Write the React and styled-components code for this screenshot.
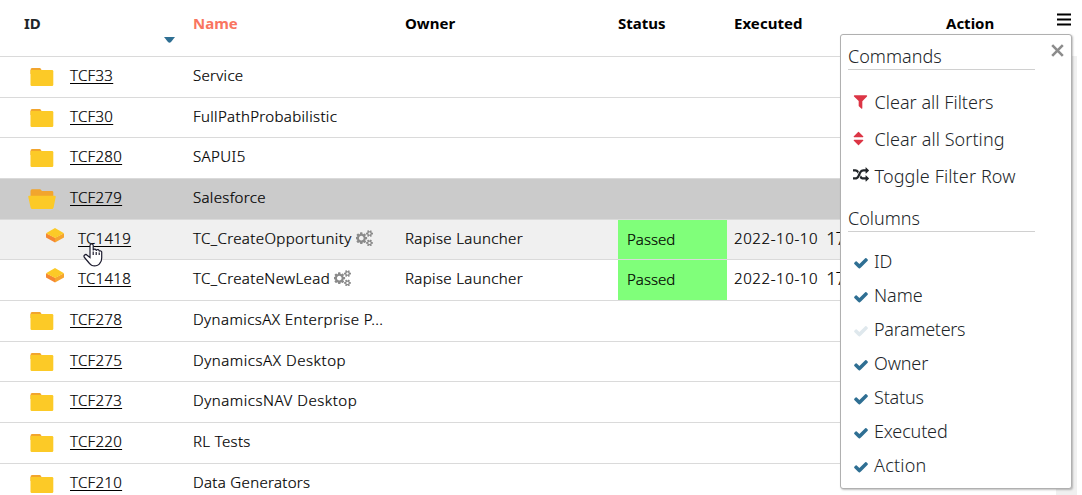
import React from "react";
import styled, { createGlobalStyle, css } from "styled-components";

const Global = createGlobalStyle`
  * { box-sizing: border-box; }
  body { margin: 0; background: #fff; overflow: hidden; }
`;

const Page = styled.div`
  position: relative;
  width: 1082px;
  height: 495px;
  overflow: hidden;
  background: #fff;
  color: #000;
  font: 300 15px/20px "Noto Sans", "Open Sans", sans-serif;
`;

const columns = css`
  display: grid;
  grid-template-columns: 193px 212px 213px 109px 113px;
`;

const Header = styled.div`
  ${columns}
  grid-template-columns: 193px 212px 213px 116px 212px 1fr;
  width: 1082px;
  height: 56px;
  padding-top: 13px;
  font-weight: 700;
`;

const HeadCell = styled.div`
  color: ${(p) => p.$color || "#000"};
  padding-left: ${(p) => p.$indent || 0}px;
  letter-spacing: ${(p) => p.$track || 0}px;
  display: flex;
  justify-content: space-between;
`;

const SortMark = styled.svg`
  width: 11px;
  height: 6px;
  margin: 24px 18px 0 0;
`;

const MenuIcon = styled.svg`
  width: 14px;
  height: 13px;
  margin: 0 11px 0 0;
`;

const Body = styled.div`
  display: flex;
  width: 1077px;
  height: 439px;
  -webkit-text-stroke: 0.2px #000;
`;

const Rows = styled.div`
  width: 1056px;
`;

const Track = styled.div`
  width: 21px;
  background: #f0f0f0;
`;

const Row = styled.div`
  ${columns}
  height: ${(p) => p.$height}px;
  border-top: 1px solid #dadada;
  background: ${(p) => p.$bg || "#fff"};
`;

const IdCell = styled.div`
  display: flex;
  align-items: flex-start;
  padding-left: ${(p) => (p.$child ? 45 : 28)}px;
`;

const IconSlot = styled.span`
  display: flex;
  width: ${(p) => (p.$child ? 33 : 42)}px;
  padding-top: ${(p) => (p.$child ? 7 : 9)}px;
`;

const Link = styled.a`
  margin-top: 8px;
  color: #000;
  text-decoration: underline;
  text-decoration-thickness: 1px;
  text-underline-offset: 2px;
  letter-spacing: 0.3px;
`;

const Cell = styled.div`
  display: flex;
  align-items: flex-start;
  padding-top: 8px;
  white-space: nowrap;
  letter-spacing: ${(p) => p.$track || 0}px;
`;

const Cogs = styled.svg`
  width: 17.6px;
  height: 16.4px;
  margin: 2px 0 0 4px;
  fill: #8a8a8a;
`;

const StatusCell = styled.div`
  padding: 9px 0 0 9px;
  background: #80ff7a;
`;

const DateCell = styled(Cell)`
  padding-left: 7px;
`;

const Time = styled.span`
  margin-left: 8px;
  font-size: 18px;
  letter-spacing: -1px;
`;

const Popup = styled.div`
  position: absolute;
  left: 840px;
  top: 34px;
  width: 232px;
  height: 455px;
  padding: 8px 7px;
  border: 1px solid #b0b0b0;
  border-radius: 3px;
  background: #fff;
  box-shadow: 1px 1px 2px rgba(0, 0, 0, 0.25);
  color: #212529;
  font: 300 18px/26px "Noto Sans", "Open Sans", sans-serif;
`;

const Close = styled.svg`
  position: absolute;
  right: 7px;
  top: 9px;
  width: 13px;
  height: 13px;
`;

const Section = styled.div`
  width: 187px;
  height: 27px;
  border-bottom: 1px solid #d0d0d0;
`;

const Commands = styled.div`
  padding: 13px 0 11px 5px;
`;

const Columns = styled.div`
  padding: 12px 0 0 5px;
`;

const Item = styled.div`
  display: flex;
  align-items: center;
  height: ${(p) => p.$height}px;
  letter-spacing: ${(p) => p.$track || 0}px;
  white-space: nowrap;
`;

const Mark = styled.span`
  display: flex;
  width: ${(p) => p.$width}px;
  color: ${(p) => p.$color};
  margin-top: ${(p) => p.$drop || 0}px;
`;

const Glyph = styled.svg`
  width: ${(p) => p.$size}px;
  height: ${(p) => p.$size}px;
  margin-left: ${(p) => p.$shift || 0}px;
  fill: currentColor;
`;

const Pointer = styled.svg`
  position: absolute;
  left: 83px;
  top: 242px;
  width: 20px;
  height: 26px;
`;

const paths = {
  check: "M1671 566q0 40-28 68l-724 724-136 136q-28 28-68 28t-68-28l-136-136-362-362q-28-28-28-68t28-68l136-136q28-28 68-28t68 28l294 295 656-657q28-28 68-28t68 28l136 136q28 28 28 68z",
  filter: "M1595 295q17 41-14 70l-493 493v742q0 42-39 59-13 5-25 5-27 0-45-19l-256-256q-19-19-19-45v-495l-493-493q-31-29-14-70 17-39 59-39h1280q42 0 59 39z",
  sort: "M1408 1088q0 26-19 45l-448 448q-19 19-45 19t-45-19l-448-448q-19-19-19-45t19-45 45-19h896q26 0 45 19t19 45zm0-384q0 26-19 45t-45 19h-896q-26 0-45-19t-19-45 19-45l448-448q19-19 45-19t45 19l448 448q19 19 19 45z",
  random: "M666 481q-60 92-137 273-22-45-37-72.500t-40.500-63.500-51-56.500-63-35-81.500-14.500h-224q-14 0-23-9t-9-23v-192q0-14 9-23t23-9h224q250 0 410 225zm1126 799q0 14-9 23l-320 320q-9 9-23 9-13 0-22.500-9.500t-9.500-22.500v-192q-32 0-85 .5t-81 1-73-1-71-5-64-10.500-63-18.500-58-28.500-59-40-55-53.500-56-69.500q59-93 136-273 22 45 37 72.500t40.500 63.500 51 56.500 63 35 81.500 14.500h256v-192q0-14 9-23t23-9q12 0 24 10l319 319q9 9 9 23zm0-896q0 14-9 23l-320 320q-9 9-23 9-13 0-22.500-9.500t-9.500-22.500v-192h-256q-48 0-87 15t-69 45-51 61.500-45 77.500q-32 62-78 171-29 66-49.500 111t-54 105-64 100-74 83-90 68.500-106.500 42-128 16.500h-224q-14 0-23-9t-9-23v-192q0-14 9-23t23-9h224q48 0 87-15t69-45 51-61.500 45-77.500q32-62 78-171 29-66 49.500-111t54-105 64-100 74-83 90-68.500 106.500-42 128-16.500h256v-192q0-14 9-23t23-9q12 0 24 10l319 319q9 9 9 23z",
  cogs: "M832 896q0-106-75-181t-181-75-181 75-75 181 75 181 181 75 181-75 75-181zm768 512q0-52-38-90t-90-38-90 38-38 90q0 53 37.500 90.500t90.500 37.500 90.500-37.500 37.500-90.500zm0-1024q0-52-38-90t-90-38-90 38-38 90q0 53 37.500 90.500t90.500 37.500 90.500-37.500 37.500-90.500zm-384 421v185q0 10-7 19.500t-16 10.500l-155 24q-11 35-32 76 34 48 90 115 7 11 7 20 0 12-7 19-23 30-82.500 89.500t-78.500 59.500q-11 0-21-7l-115-90q-37 19-77 31-11 108-23 155-7 24-30 24h-186q-11 0-20-7.500t-10-17.500l-23-153q-34-10-75-31l-118 89q-7 7-20 7-11 0-21-8-144-133-144-160 0-9 7-19 10-14 41-53t47-61q-23-44-35-82l-152-24q-10-1-17-9.500t-7-19.500v-185q0-10 7-19.500t16-10.500l155-24q11-35 32-76-34-48-90-115-7-11-7-20 0-12 7-20 22-30 82-89t79-59q11 0 21 7l115 90q34-18 77-32 11-108 23-154 7-24 30-24h186q11 0 20 7.500t10 17.500l23 153q34 10 75 31l118-89q8-7 20-7 11 0 21 8 144 133 144 160 0 8-7 19-12 16-42 54t-45 60q23 48 34 82l152 23q10 2 17 10.500t7 19.500zm640 533v140q0 16-149 31-12 27-30 52 51 113 51 138 0 4-4 7-122 71-124 71-8 0-46-47t-52-68q-20 2-30 2t-30-2q-14 21-52 68t-46 47q-2 0-124-71-4-3-4-7 0-25 51-138-18-25-30-52-149-15-149-31v-140q0-16 149-31 13-29 30-52-51-113-51-138 0-4 4-7 4-2 35-20t59-34 30-16q8 0 46 46.500t52 67.500q20-2 30-2t30 2q51-71 92-112l6-2q4 0 124 70 4 3 4 7 0 25-51 138 17 23 30 52 149 15 149 31zm0-1024v140q0 16-149 31-12 27-30 52 51 113 51 138 0 4-4 7-122 71-124 71-8 0-46-47t-52-68q-20 2-30 2t-30-2q-14 21-52 68t-46 47q-2 0-124-71-4-3-4-7 0-25 51-138-18-25-30-52-149-15-149-31v-140q0-16 149-31 13-29 30-52-51-113-51-138 0-4 4-7 4-2 35-20t59-34 30-16q8 0 46 46.500t52 67.500q20-2 30-2t30 2q51-71 92-112l6-2q4 0 124 70 4 3 4 7 0 25-51 138 17 23 30 52 149 15 149 31z",
};

const Icon = ({ name, size, shift }) => (
  <Glyph $size={size} $shift={shift} viewBox="0 0 1792 1792"><path d={paths[name]} /></Glyph>
);

const Folder = () => (
  <svg width="28" height="22" viewBox="0 0 28 22">
    <path d="M2.500 7V4.200Q2.500 2 4 2H12.200L13.600 4V8H2.500Z" fill="#f2a52d" />
    <path d="M3 4H24Q25.300 4 25.300 5.300V18.700Q25.300 20 24 20H3.700Q2.500 20 2.500 18.700V6Q2.500 4 3 4Z" fill="#fcca27" />
  </svg>
);

const OpenFolder = () => (
  <svg width="28" height="22" viewBox="0 0 28 22">
    <path d="M2.500 8V3Q2.500 1.200 4 1.200H12.300L14 3H24Q25.300 3 25.300 4.300V8Z" fill="#f2a52d" />
    <path d="M1 7.700H26.800Q28 7.700 27.700 9L25.600 19.500Q25.200 21 24 21H4.300Q3 21 2.600 19.500L.3 9Q0 7.700 1 7.700Z" fill="#fcca27" />
  </svg>
);

const Brick = () => (
  <svg width="20" height="17" viewBox="0 0 20 17">
    <path d="M1 6.200 10 10.800V15.400L1 10.400Z" fill="#f58733" />
    <path d="M19 6.200 10 10.800V15.400L19 10.400Z" fill="#f6a52e" />
    <path d="M10 1 19 6.200 10 11 1 6.200Z" fill="#fcca27" />
  </svg>
);

const rows = [
  { id: "TCF33", name: "Service", h: 41, track: 0.3 },
  { id: "TCF30", name: "FullPathProbabilistic", h: 40, track: 0.34 },
  { id: "TCF280", name: "SAPUI5", h: 41, track: 0.4 },
  { id: "TCF279", name: "Salesforce", h: 41, bg: "#cbcbcb", open: true, track: 0.32 },
  { id: "TC1419", name: "TC_CreateOpportunity", h: 40, bg: "#f0f0f0", child: true, track: 0.39 },
  { id: "TC1418", name: "TC_CreateNewLead", h: 41, child: true, track: 0.38 },
  { id: "TCF278", name: "DynamicsAX Enterprise P...", h: 41, track: 0.44 },
  { id: "TCF275", name: "DynamicsAX Desktop", h: 40, track: 0.54 },
  { id: "TCF273", name: "DynamicsNAV Desktop", h: 41, track: 0.53 },
  { id: "TCF220", name: "RL Tests", h: 41, track: 0.34 },
  { id: "TCF210", name: "Data Generators", h: 41, track: 0.32 },
];

const fields = [
  { label: "ID" },
  { label: "Name" },
  { label: "Parameters", track: -0.3, off: true },
  { label: "Owner", track: -0.15 },
  { label: "Status", track: -0.2 },
  { label: "Executed", track: -0.15 },
  { label: "Action", track: 0.2 },
];

export default function App() {
  return (
    <Page>
      <Global />
      <Header>
        <HeadCell $indent={24} $color="#212529">
          ID
          <SortMark viewBox="0 0 11 6"><path d="M0 0H11L7 5Q5.500 6.500 4 5Z" fill="#2f6f93" /></SortMark>
        </HeadCell>
        <HeadCell $color="#f97560">Name</HeadCell>
        <HeadCell>Owner</HeadCell>
        <HeadCell>Status</HeadCell>
        <HeadCell $track={0.05}>Executed</HeadCell>
        <HeadCell>
          Action
          <MenuIcon viewBox="0 0 14 13"><path d="M0 1.500H14M0 6.500H14M0 11.500H14" stroke="#000" strokeWidth="2" /></MenuIcon>
        </HeadCell>
      </Header>
      <Body>
        <Rows>
          {rows.map((r) => (
            <Row key={r.id} $height={r.h} $bg={r.bg}>
              <IdCell $child={r.child}>
                <IconSlot $child={r.child}>{r.child ? <Brick /> : r.open ? <OpenFolder /> : <Folder />}</IconSlot>
                <Link>{r.id}</Link>
              </IdCell>
              <Cell $track={r.track}>
                {r.name}
                {r.child && <Cogs viewBox="0 0 1920 1792"><path d={paths.cogs} /></Cogs>}
              </Cell>
              {r.child && (
                <>
                  <Cell $track={0.35}>Rapise Launcher</Cell>
                  <StatusCell>Passed</StatusCell>
                  <DateCell $track={0.6}>2022-10-10<Time>17</Time></DateCell>
                </>
              )}
            </Row>
          ))}
        </Rows>
        <Track />
      </Body>
      <Popup>
        <Close viewBox="0 0 13 13"><path d="M1.200 1.200 11.800 11.800M11.800 1.200 1.200 11.800" stroke="#8c8c8c" strokeWidth="2.600" /></Close>
        <Section>Commands</Section>
        <Commands>
          <Item $height={37} $track={0.03}><Mark $width={21.5} $color="#dc3545"><Icon name="filter" size={17} shift={-1.5} /></Mark>Clear all Filters</Item>
          <Item $height={37} $track={0.07}><Mark $width={21.5} $color="#dc3545" $drop={-1}><Icon name="sort" size={17} shift={-3.5} /></Mark>Clear all Sorting</Item>
          <Item $height={37} $track={0.13}><Mark $width={21.5} $color="#212529" $drop={-2}><Icon name="random" size={16} /></Mark>Toggle Filter Row</Item>
        </Commands>
        <Section>Columns</Section>
        <Columns>
          {fields.map((f) => (
            <Item key={f.label} $height={34} $track={f.track}>
              <Mark $width={21} $color={f.off ? "#dfe8ed" : "#2f6f93"} $drop={3}><Icon name="check" size={16} /></Mark>
              {f.label}
            </Item>
          ))}
        </Columns>
      </Popup>
      <Pointer viewBox="0 0 20 26">
        <path d="M7 13.500V3.500a1.600 1.600 0 0 1 3.200 0V8.500a1.500 1.500 0 0 1 3 .3 1.500 1.500 0 0 1 3 .6 1.400 1.400 0 0 1 2.500 1.100V16q0 3-1.700 5-.7 1.500-2.500 2.300-3 1.200-6 0L6.500 21.500 1.500 15.500a1.700 1.700 0 0 1 2.600-2.300L7 15.500ZM10.200 9.500V13M13.200 10V13M16.200 10.500V13" fill="#fff" stroke="#1c1b2e" strokeWidth="1.200" />
      </Pointer>
    </Page>
  );
}
